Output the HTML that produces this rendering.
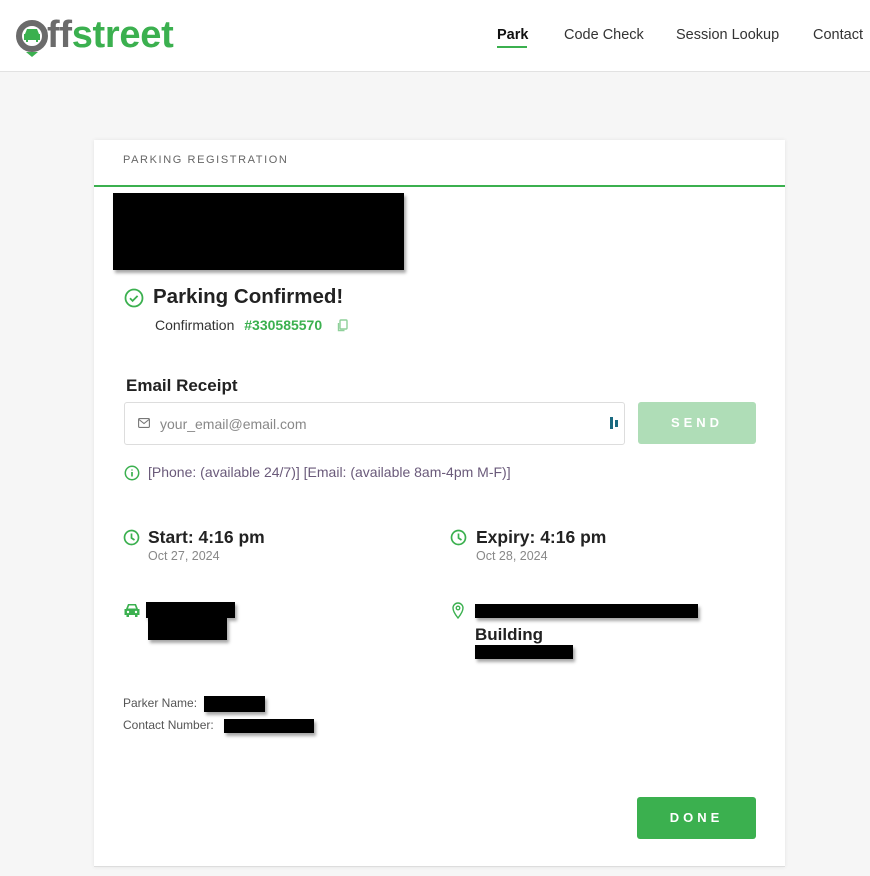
<!DOCTYPE html>
<html><head><meta charset="utf-8">
<style>
*{box-sizing:border-box;margin:0;padding:0}
body{width:870px;height:876px;overflow:hidden;background:#f6f6f6;font-family:"Liberation Sans",sans-serif;color:#222;position:relative}
.hdr{position:absolute;left:0;top:0;width:870px;height:72px;background:#fff;border-bottom:1px solid #e2e2e2}
.nav{position:absolute;top:27px;font-size:14.5px;color:#333}
.card{position:absolute;left:94px;top:140px;width:691px;height:727px;background:#fff;box-shadow:0 0 4px rgba(0,0,0,.08);border-bottom:1px solid #ddd}
.ab{position:absolute}
.blk{position:absolute;background:#000;box-shadow:2px 3px 3px rgba(0,0,0,.35)}
.g{color:#3bb04f}
</style></head><body>
<div class="hdr">
 <svg class="ab" style="left:15px;top:19px" width="36" height="40" viewBox="0 0 36 40">
  <circle cx="17" cy="17" r="13" fill="none" stroke="#6b6b6b" stroke-width="6"/>
  <path d="M10 15l2-5h10l2 5h1v6h-2v2h-2v-2h-8v2h-2v-2h-2v-6z" fill="#3bb04f"/>
  <polygon points="11,33 23,33 17,38" fill="#3bb04f"/>
 </svg>
 <div class="ab" style="left:47px;top:11px;font-size:38px;font-weight:bold;letter-spacing:-0.3px;line-height:48px"><span style="color:#6b6b6b">ff</span><span class="g">street</span></div>
 <div class="nav" style="left:497px;color:#111;font-weight:bold">Park</div>
 <div class="ab" style="left:497px;top:46px;width:30px;height:2px;background:#3bb04f"></div>
 <div class="nav" style="left:564px">Code Check</div>
 <div class="nav" style="left:676px">Session Lookup</div>
 <div class="nav" style="left:813px">Contact</div>
</div>
<div class="card">
 <div class="ab" style="left:29px;top:14px;font-size:11px;letter-spacing:1.6px;color:#666">PARKING REGISTRATION</div>
 <div class="ab" style="left:0;top:45px;width:691px;height:2px;background:#3bb04f"></div>
 <div class="blk" style="left:19px;top:53px;width:291px;height:77px"></div>
 <svg class="ab" style="left:30px;top:148px" width="20" height="20" viewBox="0 0 20 20"><circle cx="10" cy="10" r="8.5" fill="none" stroke="#3bb04f" stroke-width="1.8"/><path d="M6 10.3l2.6 2.6 5-5" fill="none" stroke="#3bb04f" stroke-width="1.8"/></svg>
 <div class="ab" style="left:59px;top:145px;font-size:20.5px;font-weight:bold;color:#222">Parking Confirmed!</div>
 <div class="ab" style="left:61px;top:177px;font-size:14px;color:#333">Confirmation <b class="g" style="margin-left:6px">#330585570</b></div>
 <svg class="ab" style="left:243px;top:179px" width="12" height="13" viewBox="0 0 12 13"><rect x="3" y="1" width="7" height="9" rx="1" fill="none" stroke="#8fd09a" stroke-width="1.4"/><path d="M1.5 4v7.5h6" fill="none" stroke="#8fd09a" stroke-width="1.4"/></svg>
 <div class="ab" style="left:32px;top:236px;font-size:17px;font-weight:bold;color:#222">Email Receipt</div>
 <div class="ab" style="left:30px;top:262px;width:501px;height:43px;border:1px solid #ddd;border-radius:3px"></div>
 <svg class="ab" style="left:44px;top:278px" width="12" height="10" viewBox="0 0 12 10"><rect x=".6" y=".6" width="10.8" height="8.8" rx="1" fill="none" stroke="#777" stroke-width="1.1"/><path d="M1 1.5l5 4 5-4" fill="none" stroke="#777" stroke-width="1.1"/></svg>
 <div class="ab" style="left:66px;top:276px;font-size:14px;color:#888">your_email@email.com</div>
 <div class="ab" style="left:516px;top:277px;width:3px;height:12px;background:#1a6a80"></div>
 <div class="ab" style="left:521px;top:280px;width:3px;height:7px;background:#1a6a80"></div>
 <div class="ab" style="left:544px;top:262px;width:118px;height:42px;background:#afddb7;border-radius:3px;color:#fff;font-size:13px;font-weight:bold;letter-spacing:4px;text-align:center;line-height:42px">SEND</div>
 <svg class="ab" style="left:30px;top:325px" width="16" height="16" viewBox="0 0 16 16"><circle cx="8" cy="8" r="6.7" fill="none" stroke="#3bb04f" stroke-width="1.5"/><path d="M8 7v4.5M8 4.5v1" stroke="#3bb04f" stroke-width="1.7"/></svg>
 <div class="ab" style="left:54px;top:324px;font-size:14px;color:#6a5a7a">[Phone: (available 24/7)] [Email: (available 8am-4pm M-F)]</div>
 <svg class="ab" style="left:29px;top:389px" width="17" height="17" viewBox="0 0 17 17"><circle cx="8.5" cy="8.5" r="7" fill="none" stroke="#3bb04f" stroke-width="1.7"/><path d="M8.5 4.5v4.5l3 2" fill="none" stroke="#3bb04f" stroke-width="1.7"/></svg>
 <div class="ab" style="left:54px;top:387px;font-size:17.5px;font-weight:bold">Start: 4:16 pm</div>
 <div class="ab" style="left:54px;top:409px;font-size:12.5px;color:#888">Oct 27, 2024</div>
 <svg class="ab" style="left:356px;top:389px" width="17" height="17" viewBox="0 0 17 17"><circle cx="8.5" cy="8.5" r="7" fill="none" stroke="#3bb04f" stroke-width="1.7"/><path d="M8.5 4.5v4.5l3 2" fill="none" stroke="#3bb04f" stroke-width="1.7"/></svg>
 <div class="ab" style="left:382px;top:387px;font-size:17.5px;font-weight:bold">Expiry: 4:16 pm</div>
 <div class="ab" style="left:382px;top:409px;font-size:12.5px;color:#888">Oct 28, 2024</div>
 <svg class="ab" style="left:29px;top:463px" width="18" height="15" viewBox="0 0 18 15"><path d="M3 6l2-5h8l2 5h1.5v6h-2v2h-2.5v-2h-6v2H3.5v-2h-2V6z" fill="#3bb04f"/><circle cx="5" cy="9" r="1.2" fill="#fff"/><circle cx="13" cy="9" r="1.2" fill="#fff"/><path d="M5 5.5l1.2-3h5.6l1.2 3z" fill="#fff"/></svg>
 <div class="blk" style="left:52px;top:462px;width:89px;height:16px"></div>
 <div class="blk" style="left:54px;top:478px;width:79px;height:22px"></div>
 <svg class="ab" style="left:358px;top:462px" width="12" height="17" viewBox="0 0 12 17"><path d="M6 16C2 11 1 8.5 1 6a5 5 0 0110 0c0 2.5-1 5-5 10z" fill="none" stroke="#3bb04f" stroke-width="1.4"/><circle cx="6" cy="6" r="1.8" fill="none" stroke="#3bb04f" stroke-width="1.3"/></svg>
 <div class="blk" style="left:381px;top:464px;width:223px;height:14px"></div>
 <div class="ab" style="left:381px;top:485px;font-size:17px;font-weight:bold">Building</div>
 <div class="blk" style="left:381px;top:505px;width:98px;height:14px"></div>
 <div class="ab" style="left:29px;top:556px;font-size:12px;color:#555">Parker Name:</div>
 <div class="blk" style="left:110px;top:556px;width:61px;height:16px"></div>
 <div class="ab" style="left:29px;top:578px;font-size:12px;color:#555">Contact Number:</div>
 <div class="blk" style="left:130px;top:579px;width:90px;height:14px"></div>
 <div class="ab" style="left:543px;top:657px;width:119px;height:42px;background:#3bb04f;border-radius:3px;color:#fff;font-size:13px;font-weight:bold;letter-spacing:4px;text-align:center;line-height:42px">DONE</div>
</div>
</body></html>
